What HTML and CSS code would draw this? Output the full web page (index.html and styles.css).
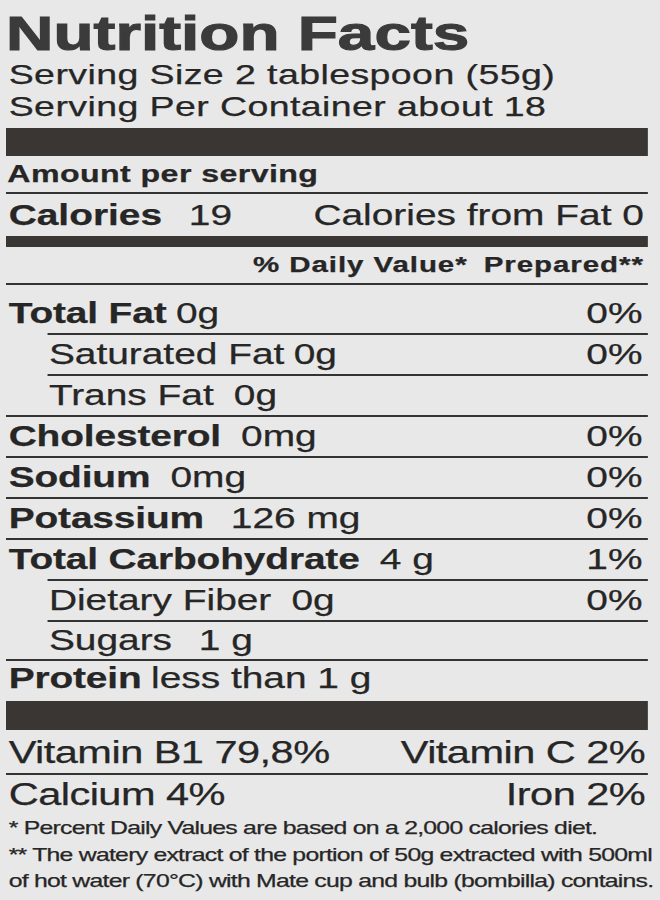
FILE: index.html
```html
<!DOCTYPE html>
<html lang="en">
<head>
<meta charset="utf-8">
<title>Nutrition Facts</title>
<link rel="stylesheet" href="styles.css">
</head>
<body>
<div class="label">
  <h1 class="title">Nutrition Facts</h1>
  <p class="serving">Serving Size 2 tablespoon (55g)</p>
  <p class="serving">Serving Per Container about 18</p>
  <div class="bar bar-thick"></div>
  <div class="amount-head">Amount per serving</div>
  <div class="cal-row">
    <span><b>Calories</b><span class="amt wide">19</span></span>
    <span>Calories from Fat 0</span>
  </div>
  <div class="bar bar-mid"></div>
  <div class="dv-head">% Daily Value*<span class="amt narrow">Prepared**</span></div>
  <div class="row first"><span><b>Total Fat</b><span class="amt tight">0g</span></span><span>0%</span></div>
  <div class="row sub"><span>Saturated Fat<span class="amt tight">0g</span></span><span>0%</span></div>
  <div class="row sub"><span>Trans Fat<span class="amt">0g</span></span></div>
  <div class="row"><span><b>Cholesterol</b><span class="amt">0mg</span></span><span>0%</span></div>
  <div class="row"><span><b>Sodium</b><span class="amt">0mg</span></span><span>0%</span></div>
  <div class="row"><span><b>Potassium</b><span class="amt wide">126 mg</span></span><span>0%</span></div>
  <div class="row"><span><b>Total Carbohydrate</b><span class="amt">4 g</span></span><span>1%</span></div>
  <div class="row sub"><span>Dietary Fiber<span class="amt">0g</span></span><span>0%</span></div>
  <div class="row sub sugars"><span>Sugars<span class="amt wide">1 g</span></span></div>
  <div class="row protein"><span><b>Protein</b><span class="amt tight">less than 1 g</span></span></div>
  <div class="bar bar-thick bar-bottom"></div>
  <div class="vit-row vit-first"><span>Vitamin B1 79,8%</span><span>Vitamin C 2%</span></div>
  <div class="vit-row"><span>Calcium 4%</span><span>Iron 2%</span></div>
  <div class="notes">
    <div>* Percent Daily Values are based on a 2,000 calories diet.</div>
    <div>** The watery extract of the portion of 50g extracted with 500ml</div>
    <div>of hot water (70°C) with Mate cup and bulb (bombilla) contains.</div>
  </div>
</div>
</body>
</html>
```
FILE: styles.css
```css
html, body {
  margin: 0;
  padding: 0;
  background: #e8e8e8;
}

body {
  width: 660px;
  height: 900px;
  overflow: hidden;
  font-family: "Liberation Sans", Arial, sans-serif;
  color: #262626;
}

.label {
  width: 479px;
  margin-left: 6px;
  padding-top: 7px;
  transform: scaleX(1.34);
  transform-origin: 0 0;
  -webkit-text-stroke: 0.25px #262626;
}

.title {
  margin: 0 0 0 -1px;
  font-size: 49px;
  line-height: 52px;
  font-weight: bold;
  color: #3b3b3b;
  -webkit-text-stroke: 1.1px #3b3b3b;
  padding-left: 1px;
}

.serving {
  margin: 0;
  padding-left: 2px;
  font-size: 28px;
  line-height: 32px;
  letter-spacing: 0.3px;
}

.bar {
  background: #3a3633;
}

.bar-thick {
  height: 28px;
  margin-top: 5px;
}

.bar-mid {
  height: 11px;
}

.bar-bottom {
  height: 29px;
  margin-top: 5px;
}

.amount-head {
  padding-left: 1px;
  font-size: 24px;
  font-weight: bold;
  line-height: 36px;
  letter-spacing: 0.3px;
  border-bottom: 2px solid #333;
}

.cal-row {
  display: flex;
  justify-content: space-between;
  padding: 0 3px 0 2px;
  font-size: 29px;
  line-height: 42px;
}

.dv-head {
  text-align: right;
  padding-right: 3px;
  font-size: 22px;
  font-weight: bold;
  line-height: 36px;
  letter-spacing: 0.7px;
}

.amt {
  margin-left: 15px;
}

.amt.wide {
  margin-left: 20px;
}

.amt.tight {
  margin-left: 7px;
}

.amt.narrow {
  margin-left: 12px;
}

.row {
  display: flex;
  justify-content: space-between;
  padding: 0 4px 0 2px;
  border-top: 2px solid #333;
  font-size: 29px;
  line-height: 39px;
}

.row b {
  letter-spacing: -0.1px;
}

.row.first {
  padding-top: 9px;
}

.row.sub {
  margin-left: 31px;
  padding-left: 1px;
}

.row.sugars {
  line-height: 37px;
}

.row.protein {
  line-height: 35px;
}

.vit-row {
  display: flex;
  justify-content: space-between;
  padding: 0 2px 0 2px;
  font-size: 31px;
  line-height: 40px;
  letter-spacing: -0.4px;
}

.vit-first {
  padding-top: 3px;
  border-bottom: 2px solid #333;
}

.notes {
  padding-left: 2px;
  font-size: 18.5px;
  line-height: 26.5px;
  letter-spacing: -0.56px;
  white-space: nowrap;
}
```
